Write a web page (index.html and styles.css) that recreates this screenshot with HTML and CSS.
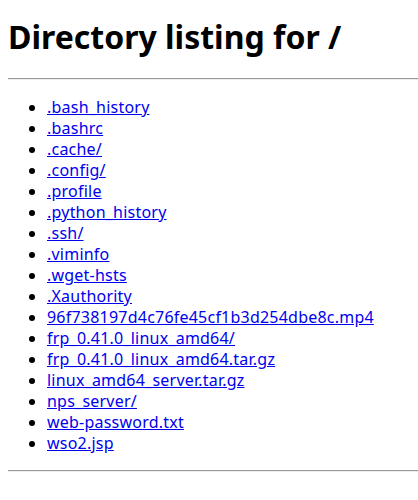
FILE: index.html
```html
<!DOCTYPE html>
<html>
<head>
<meta charset="utf-8">
<title>Directory listing for /</title>
<link rel="stylesheet" href="styles.css">
</head>
<body>
<h1 class="title">Directory listing for /</h1>
<hr class="rule">
<ul class="listing">
<li><a href=".bash_history">.bash_history</a></li>
<li><a href=".bashrc">.bashrc</a></li>
<li><a href=".cache/">.cache/</a></li>
<li><a href=".config/">.config/</a></li>
<li><a href=".profile">.profile</a></li>
<li><a href=".python_history">.python_history</a></li>
<li><a href=".ssh/">.ssh/</a></li>
<li><a href=".viminfo">.viminfo</a></li>
<li><a href=".wget-hsts">.wget-hsts</a></li>
<li><a href=".Xauthority">.Xauthority</a></li>
<li><a href="96f738197d4c76fe45cf1b3d254dbe8c.mp4">96f738197d4c76fe45cf1b3d254dbe8c.mp4</a></li>
<li><a href="frp_0.41.0_linux_amd64/">frp_0.41.0_linux_amd64/</a></li>
<li><a href="frp_0.41.0_linux_amd64.tar.gz">frp_0.41.0_linux_amd64.tar.gz</a></li>
<li><a href="linux_amd64_server.tar.gz">linux_amd64_server.tar.gz</a></li>
<li><a href="nps_server/">nps_server/</a></li>
<li><a href="web-password.txt">web-password.txt</a></li>
<li><a href="wso2.jsp">wso2.jsp</a></li>
</ul>
<hr class="rule">
</body>
</html>
```
FILE: styles.css
```css
html, body {
  background: #fff;
}
body {
  margin: 0 0 8px 8px;
  font-family: "Noto Sans", "Noto Sans CJK SC", sans-serif;
  font-size: 16px;
  color: #000;
}
.title {
  font-size: 32px;
  font-weight: bold;
  line-height: 42px;
  margin: 16px 0 0 0;
}
.rule {
  margin: 20px 0 0 0;
  border: 0;
  border-top: 1px solid #9a9a9a;
  border-bottom: 1px solid #eeeeee;
  height: 0;
}
.listing {
  margin: 17px 0 0 0;
  padding-left: 39px;
  line-height: 21px;
  letter-spacing: 0.22px;
}
.listing a {
  color: #0000ee;
}
.listing + .rule {
  margin-top: 16px;
}
```
